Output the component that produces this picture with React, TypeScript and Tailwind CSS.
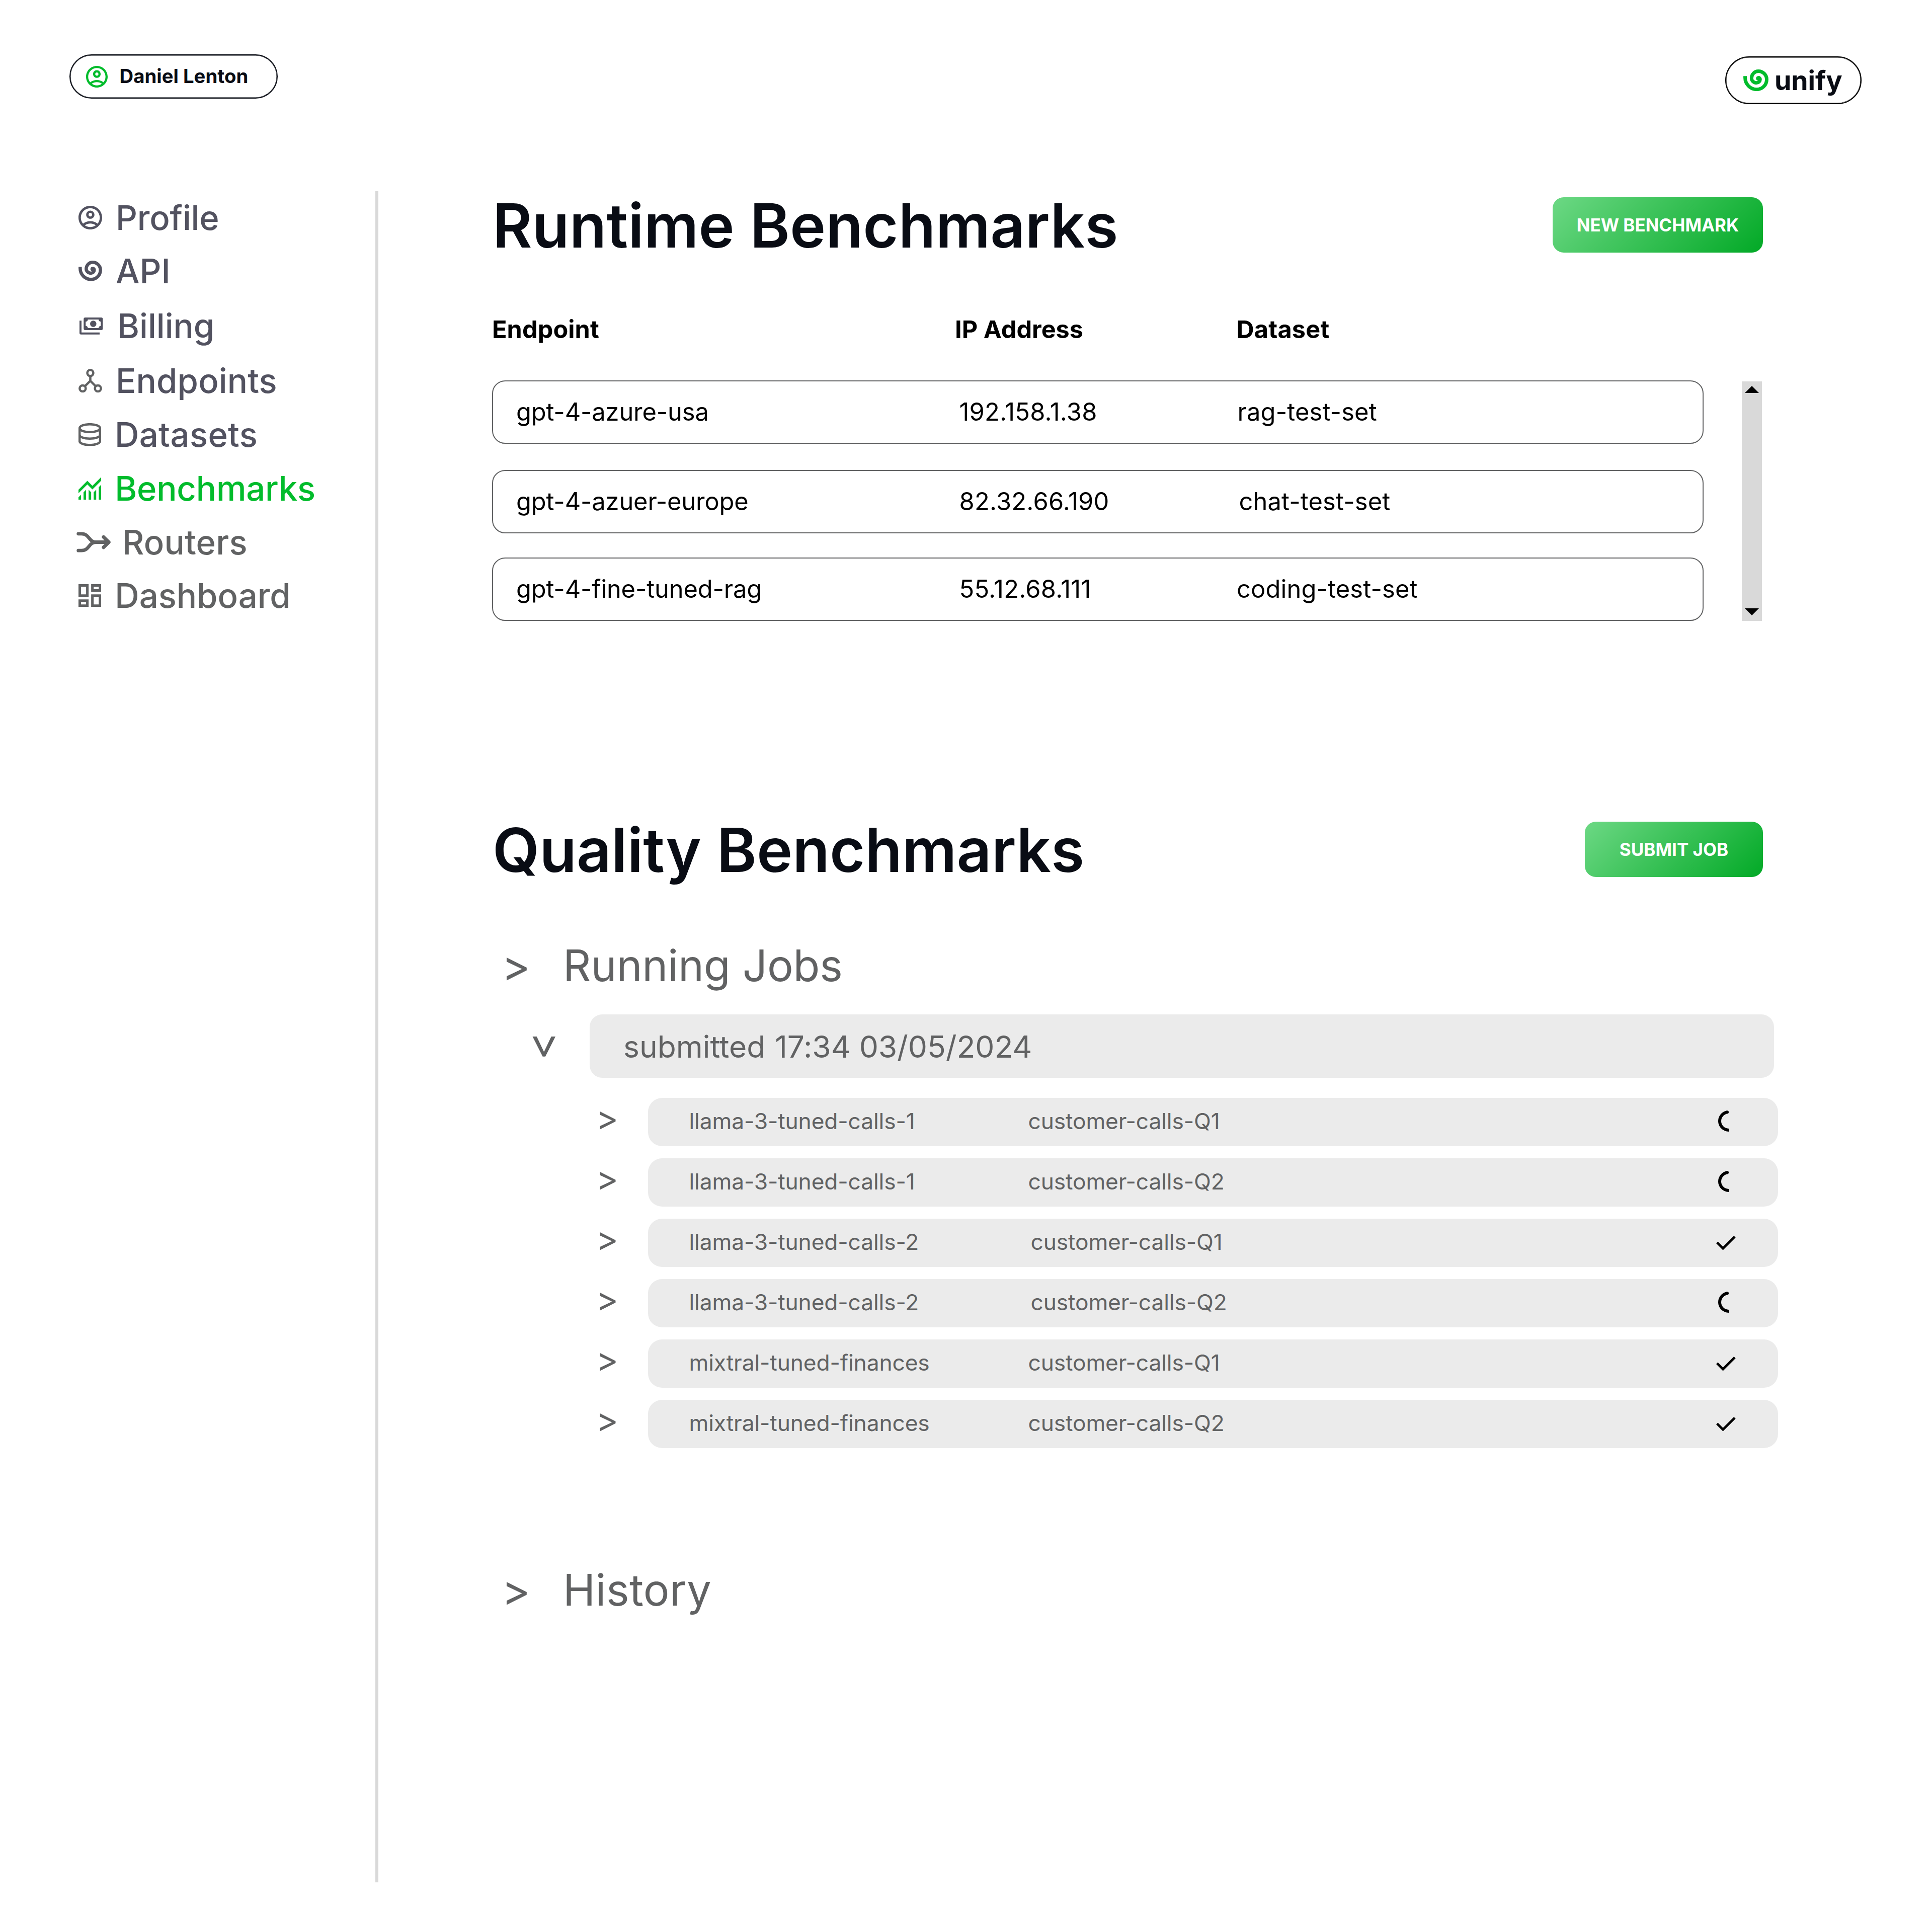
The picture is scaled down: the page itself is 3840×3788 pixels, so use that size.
import React from "react";

type IconProps = { className?: string };

function AccountIcon({ className }: IconProps) {
  return (
    <svg viewBox="2 2 20 20" fill="currentColor" className={className}>
      <path d="M12 2C6.48 2 2 6.48 2 12s4.48 10 10 10 10-4.48 10-10S17.52 2 12 2zM7.35 18.5C8.66 17.56 10.26 17 12 17s3.34.56 4.65 1.5C15.34 19.44 13.74 20 12 20s-3.34-.56-4.65-1.5zm10.79-1.38a9.947 9.947 0 0 0-12.28 0A7.957 7.957 0 0 1 4 12c0-4.42 3.58-8 8-8s8 3.58 8 8c0 1.95-.7 3.73-1.86 5.12z" />
      <path d="M12 6c-1.93 0-3.5 1.57-3.5 3.5S10.07 13 12 13s3.5-1.57 3.5-3.5S13.93 6 12 6zm0 5c-.83 0-1.5-.67-1.5-1.5S11.17 8 12 8s1.5.67 1.5 1.5S12.83 11 12 11z" />
    </svg>
  );
}

function SpiralIcon({ className }: IconProps) {
  return (
    <svg viewBox="0 0 141 122" fill="none" stroke="currentColor" strokeWidth="19.5" className={className}>
      <path d="M10 37 V46A65 66 0 0 0 75 112 A56 56 0 0 0 131 56 A47 46 0 0 0 84 10 A38 39 0 0 0 46 49 A28 26 0 0 0 74 75 A20 20 0 0 0 94 55 A10 9 0 0 0 84 46" />
      <circle cx="84" cy="50" r="13" fill="currentColor" stroke="none" />
    </svg>
  );
}

function BillingIcon({ className }: IconProps) {
  return (
    <svg viewBox="0 0 48 34" fill="currentColor" className={className}>
      <path d="M0 6.3h4v23.4h36v4H3a3 3 0 0 1-3-3z" />
      <path
        fillRule="evenodd"
        d="M11.3 0h32a3 3 0 0 1 3 3v19a3 3 0 0 1-3 3h-32a3 3 0 0 1-3-3V3a3 3 0 0 1 3-3zM16.6 4a4.2 4.2 0 0 1-4.3 4.2v8.6a4.2 4.2 0 0 1 4.3 4.2H38a4.2 4.2 0 0 1 4.3-4.2V8.2A4.2 4.2 0 0 1 38 4z"
      />
      <circle cx="27.3" cy="12.5" r="6.3" />
    </svg>
  );
}

function EndpointsIcon({ className }: IconProps) {
  return (
    <svg viewBox="0 0 141 142" fill="none" stroke="currentColor" strokeWidth="13.5" className={className}>
      <circle cx="70.5" cy="25" r="18" />
      <circle cx="25" cy="117" r="18" />
      <circle cx="116" cy="117" r="18" />
      <path d="M70.5 43V72M38 104L70.5 72L103 104" />
    </svg>
  );
}

function DatasetsIcon({ className }: IconProps) {
  return (
    <svg viewBox="0 0 135 137" fill="none" stroke="currentColor" strokeWidth="13.5" className={className}>
      <ellipse cx="67.5" cy="30" rx="61" ry="23.5" />
      <path d="M6.5 30V107C6.5 120 34 130.5 67.5 130.5S128.5 120 128.5 107V30" />
      <path d="M6.5 70C6.5 83 34 92.5 67.5 92.5S128.5 83 128.5 70" />
    </svg>
  );
}

function BenchmarksIcon({ className }: IconProps) {
  return (
    <svg viewBox="3 3 18 18" fill="currentColor" className={className}>
      <path d="M3 21v-2l2-2v4zm4 0v-6l2-2v8zm4 0v-8l2 2.025V21zm4 0v-5.975l2-2V21zm4 0V11l2-2v12zM3 15.825V13l7-7 4 4 7-7v2.825l-7 7-4-4z" />
    </svg>
  );
}

function RoutersIcon({ className }: IconProps) {
  return (
    <svg
      viewBox="0 0 68 41"
      fill="none"
      stroke="currentColor"
      strokeWidth="6.8"
      strokeLinecap="round"
      strokeLinejoin="round"
      className={className}
    >
      <path d="M3.7 3.8H10C26 3.8 24 20.5 39 20.5H64.3M3.7 37.2H10C26 37.2 24 20.5 39 20.5M53.8 10.2L64.3 20.5L53.8 30.8" />
    </svg>
  );
}

function DashboardIcon({ className }: IconProps) {
  return (
    <svg viewBox="3 3 18 18" fill="currentColor" className={className}>
      <path d="M19 5v2h-4V5h4M9 5v6H5V5h4m10 8v6h-4v-6h4M9 17v2H5v-2h4M21 3h-8v6h8V3zM11 3H3v10h8V3zm10 8h-8v10h8V11zm-10 4H3v6h8v-6z" />
    </svg>
  );
}

function Spinner() {
  return (
    <svg viewBox="0 0 21 42" className="ml-1 mt-[25px] h-[42px] w-[21px]" fill="none" stroke="black" strokeWidth="6">
      <path d="M21 39A18 18 0 0 1 3 21A18 18 0 0 1 18.5 3.2" />
      <circle cx="18" cy="3.2" r="3" fill="black" stroke="none" />
    </svg>
  );
}

function Check() {
  return (
    <svg viewBox="3.85 5.975 16.3 12.025" className="mt-[33.5px] h-[28.5px] w-[38.7px]">
      <path d="M9.55 18 3.85 12.3l1.425-1.425L9.55 15.15l9.175-9.175L20.15 7.4z" />
    </svg>
  );
}

const NAV = [
  { label: "Profile", Icon: AccountIcon, icon: "h-[47px] w-[47px]", row: "tracking-[-0.2px] text-[#525260]" },
  { label: "API", Icon: SpiralIcon, icon: "h-[40.7px] w-[47px]", row: "mt-[41px] text-[#525260]" },
  { label: "Billing", Icon: BillingIcon, icon: "ml-[2px] h-[34px] w-[48px]", row: "mt-[44px] text-[#525260]" },
  { label: "Endpoints", Icon: EndpointsIcon, icon: "h-[47.3px] w-[47px] text-[#616263]", row: "mt-[44px] tracking-[0.15px] text-[#525260]" },
  { label: "Datasets", Icon: DatasetsIcon, icon: "h-[45.7px] w-[45px] text-[#616263]", row: "mt-[42px] tracking-[0.35px] text-[#525260]" },
  { label: "Benchmarks", Icon: BenchmarksIcon, icon: "h-[45.3px] w-[45.3px]", row: "mt-[42px] tracking-[-0.2px] text-[#02bc2c]" },
  { label: "Routers", Icon: RoutersIcon, icon: "-ml-1 -mr-1 h-[41px] w-[68px]", row: "mt-[42px] tracking-[0.3px] text-[#616263]" },
  { label: "Dashboard", Icon: DashboardIcon, icon: "h-[45.3px] w-[45.3px]", row: "mt-[41px] text-[#616263]" },
];

const ENDPOINTS = [
  { name: "gpt-4-azure-usa", ip: "192.158.1.38", dataset: "rag-test-set", row: "", cell: "pl-[3px]" },
  { name: "gpt-4-azuer-europe", ip: "82.32.66.190", dataset: "chat-test-set", row: "mt-[52px]", cell: "pl-[6px]" },
  { name: "gpt-4-fine-tuned-rag", ip: "55.12.68.111", dataset: "coding-test-set", row: "mt-[48px]", cell: "pl-[1.5px]" },
];

const JOBS = [
  { model: "llama-3-tuned-calls-1", dataset: "customer-calls-Q1", done: false, cell: "" },
  { model: "llama-3-tuned-calls-1", dataset: "customer-calls-Q2", done: false, cell: "" },
  { model: "llama-3-tuned-calls-2", dataset: "customer-calls-Q1", done: true, cell: "pl-[5px]" },
  { model: "llama-3-tuned-calls-2", dataset: "customer-calls-Q2", done: false, cell: "pl-[5px]" },
  { model: "mixtral-tuned-finances", dataset: "customer-calls-Q1", done: true, cell: "" },
  { model: "mixtral-tuned-finances", dataset: "customer-calls-Q2", done: true, cell: "" },
];

function SectionHeader({
  title,
  action,
  titleClass,
  width,
}: {
  title: string;
  action: string;
  titleClass: string;
  width: string;
}) {
  return (
    <div className="flex w-[2525px] items-start justify-between">
      <h1 className={`h-[110px] text-[120.5px] leading-[112px] font-semibold text-[#090c14] ${titleClass}`}>{title}</h1>
      <button
        className={`h-[110px] ${width} rounded-[22px] bg-[linear-gradient(135deg,#6cd884_0%,#02a926_100%)] text-[35px] leading-[110px] font-bold text-white`}
      >
        {action}
      </button>
    </div>
  );
}

function GroupTitle({ children, tracking }: { children: string; tracking: string }) {
  return (
    <div className="flex h-[105px] text-[86.4px] leading-[105px]">
      <span className="ml-[19px] w-[122px]">&gt;</span>
      <span className={tracking}>{children}</span>
    </div>
  );
}

export default function App() {
  return (
    <div className="flex h-[3788px] w-[3840px] flex-col bg-white font-['Inter',sans-serif] whitespace-nowrap">
      <header className="flex h-[380px] shrink-0 items-start justify-between pr-[140px] pl-[138px]">
        <div className="mt-[108px] flex h-[88px] w-[414px] items-start rounded-full border-2 border-[#090c14] pl-[31px] shadow-[inset_0_0_0_0.5px_#090c14]">
          <AccountIcon className="mt-[20.5px] h-[43px] w-[43px] text-[#02bc2c]" />
          <span className="ml-[23.6px] text-[38.3px] leading-[82px] font-bold text-[#090c14]">Daniel Lenton</span>
        </div>
        <div className="mt-[112px] flex h-[95px] w-[271px] items-start rounded-full border-2 border-black pl-[34px] shadow-[inset_0_0_0_0.5px_#000]">
          <SpiralIcon className="mt-[23.5px] h-[43.3px] w-[50px] text-[#02bc2c]" />
          <span className="ml-[12px] text-[53.5px] leading-[91px] font-bold text-[#090c14]">unify</span>
        </div>
      </header>

      <div className="flex">
        <nav className="flex w-[746px] flex-col pt-[20px] pl-[156px]">
          {NAV.map(({ label, Icon, icon, row }) => (
            <a key={label} className={`flex h-[65px] items-center gap-[27px] text-[67px] leading-[65px] font-medium ${row}`}>
              <Icon className={`shrink-0 ${icon}`} />
              <span>{label}</span>
            </a>
          ))}
        </nav>
        <div className="h-[3361px] w-[6px] bg-[#d9d9d9]" />

        <main className="flex flex-col pt-[12px] pl-[226px]">
          <section className="pl-[1px]">
            <SectionHeader
              title="Runtime Benchmarks"
              action="NEW BENCHMARK"
              titleClass="tracking-[0.15px]"
              width="w-[418px]"
            />
            <div className="-ml-[1px] mt-[122px] grid grid-cols-[920px_559.5px_auto] text-[48.6px] leading-[61px] font-bold text-black">
              <span className="tracking-[0.1px]">Endpoint</span>
              <span>IP Address</span>
              <span className="tracking-[0.2px]">Dataset</span>
            </div>
            <div className="-ml-[1px] mt-[71px] flex">
              <div className="w-[2408px]">
                {ENDPOINTS.map((e) => (
                  <div
                    key={e.name}
                    className={`grid h-[126px] grid-cols-[880.5px_550px_auto] rounded-[26px] border-2 border-[#616263] pl-[46px] text-[48.8px] leading-[121px] text-black ${e.row}`}
                  >
                    <span className="tracking-[-0.15px]">{e.name}</span>
                    <span className="tracking-[0.25px]">{e.ip}</span>
                    <span className={`tracking-[0.15px] ${e.cell}`}>{e.dataset}</span>
                  </div>
                ))}
              </div>
              <div className="mt-[2px] ml-[76px] flex h-[476px] w-[40px] flex-col items-center justify-between bg-[#d9d9d9] pt-[8.5px] pb-[11px]">
                <svg viewBox="0 0 28 14" className="h-[14px] w-[28px]">
                  <path d="M14 0L28 14H0z" />
                </svg>
                <svg viewBox="0 0 28 14" className="h-[14px] w-[28px]">
                  <path d="M0 0H28L14 14z" />
                </svg>
              </div>
            </div>
          </section>

          <section className="mt-[399px] text-[#616263]">
            <div className="pl-[1px]">
              <SectionHeader
                title="Quality Benchmarks"
                action="SUBMIT JOB"
                titleClass="tracking-normal"
                width="w-[354px]"
              />
            </div>
            <div className="mt-[123px]">
              <GroupTitle tracking="tracking-[-0.15px]">Running Jobs</GroupTitle>
            </div>
            <div className="mt-[45px] flex h-[126px]">
              <div className="flex w-[194px] items-center justify-end pr-[55px] pb-[2px]">
                <span className="h-[105px] rotate-90 text-[86.4px] leading-[105px]">&gt;</span>
              </div>
              <div className="h-[126px] w-[2354px] rounded-[25px] bg-[#ebebeb] pl-[67px] text-[60.5px] leading-[128px]">
                submitted <span className="ml-[2px] tracking-[-0.05px]">17:34 03/05/2024</span>
              </div>
            </div>
            <div className="mt-[40px] flex flex-col gap-[24px]">
              {JOBS.map((j, i) => (
                <div key={i} className="flex h-[96px]">
                  <span className="w-[310px] pl-[206.7px] text-[67.2px] leading-[79px]">&gt;</span>
                  <div className="flex h-[96px] w-[2246px] rounded-[28px] bg-[#ebebeb] pl-[81.5px] text-[44.3px] leading-[92px] tracking-[-0.12px]">
                    <span className="w-[674px]">{j.model}</span>
                    <span className={`w-[1367.5px] ${j.cell}`}>{j.dataset}</span>
                    {j.done ? <Check /> : <Spinner />}
                  </div>
                </div>
              ))}
            </div>
            <div className="mt-[229px]">
              <GroupTitle tracking="tracking-[0.4px]">History</GroupTitle>
            </div>
          </section>
        </main>
      </div>
    </div>
  );
}
